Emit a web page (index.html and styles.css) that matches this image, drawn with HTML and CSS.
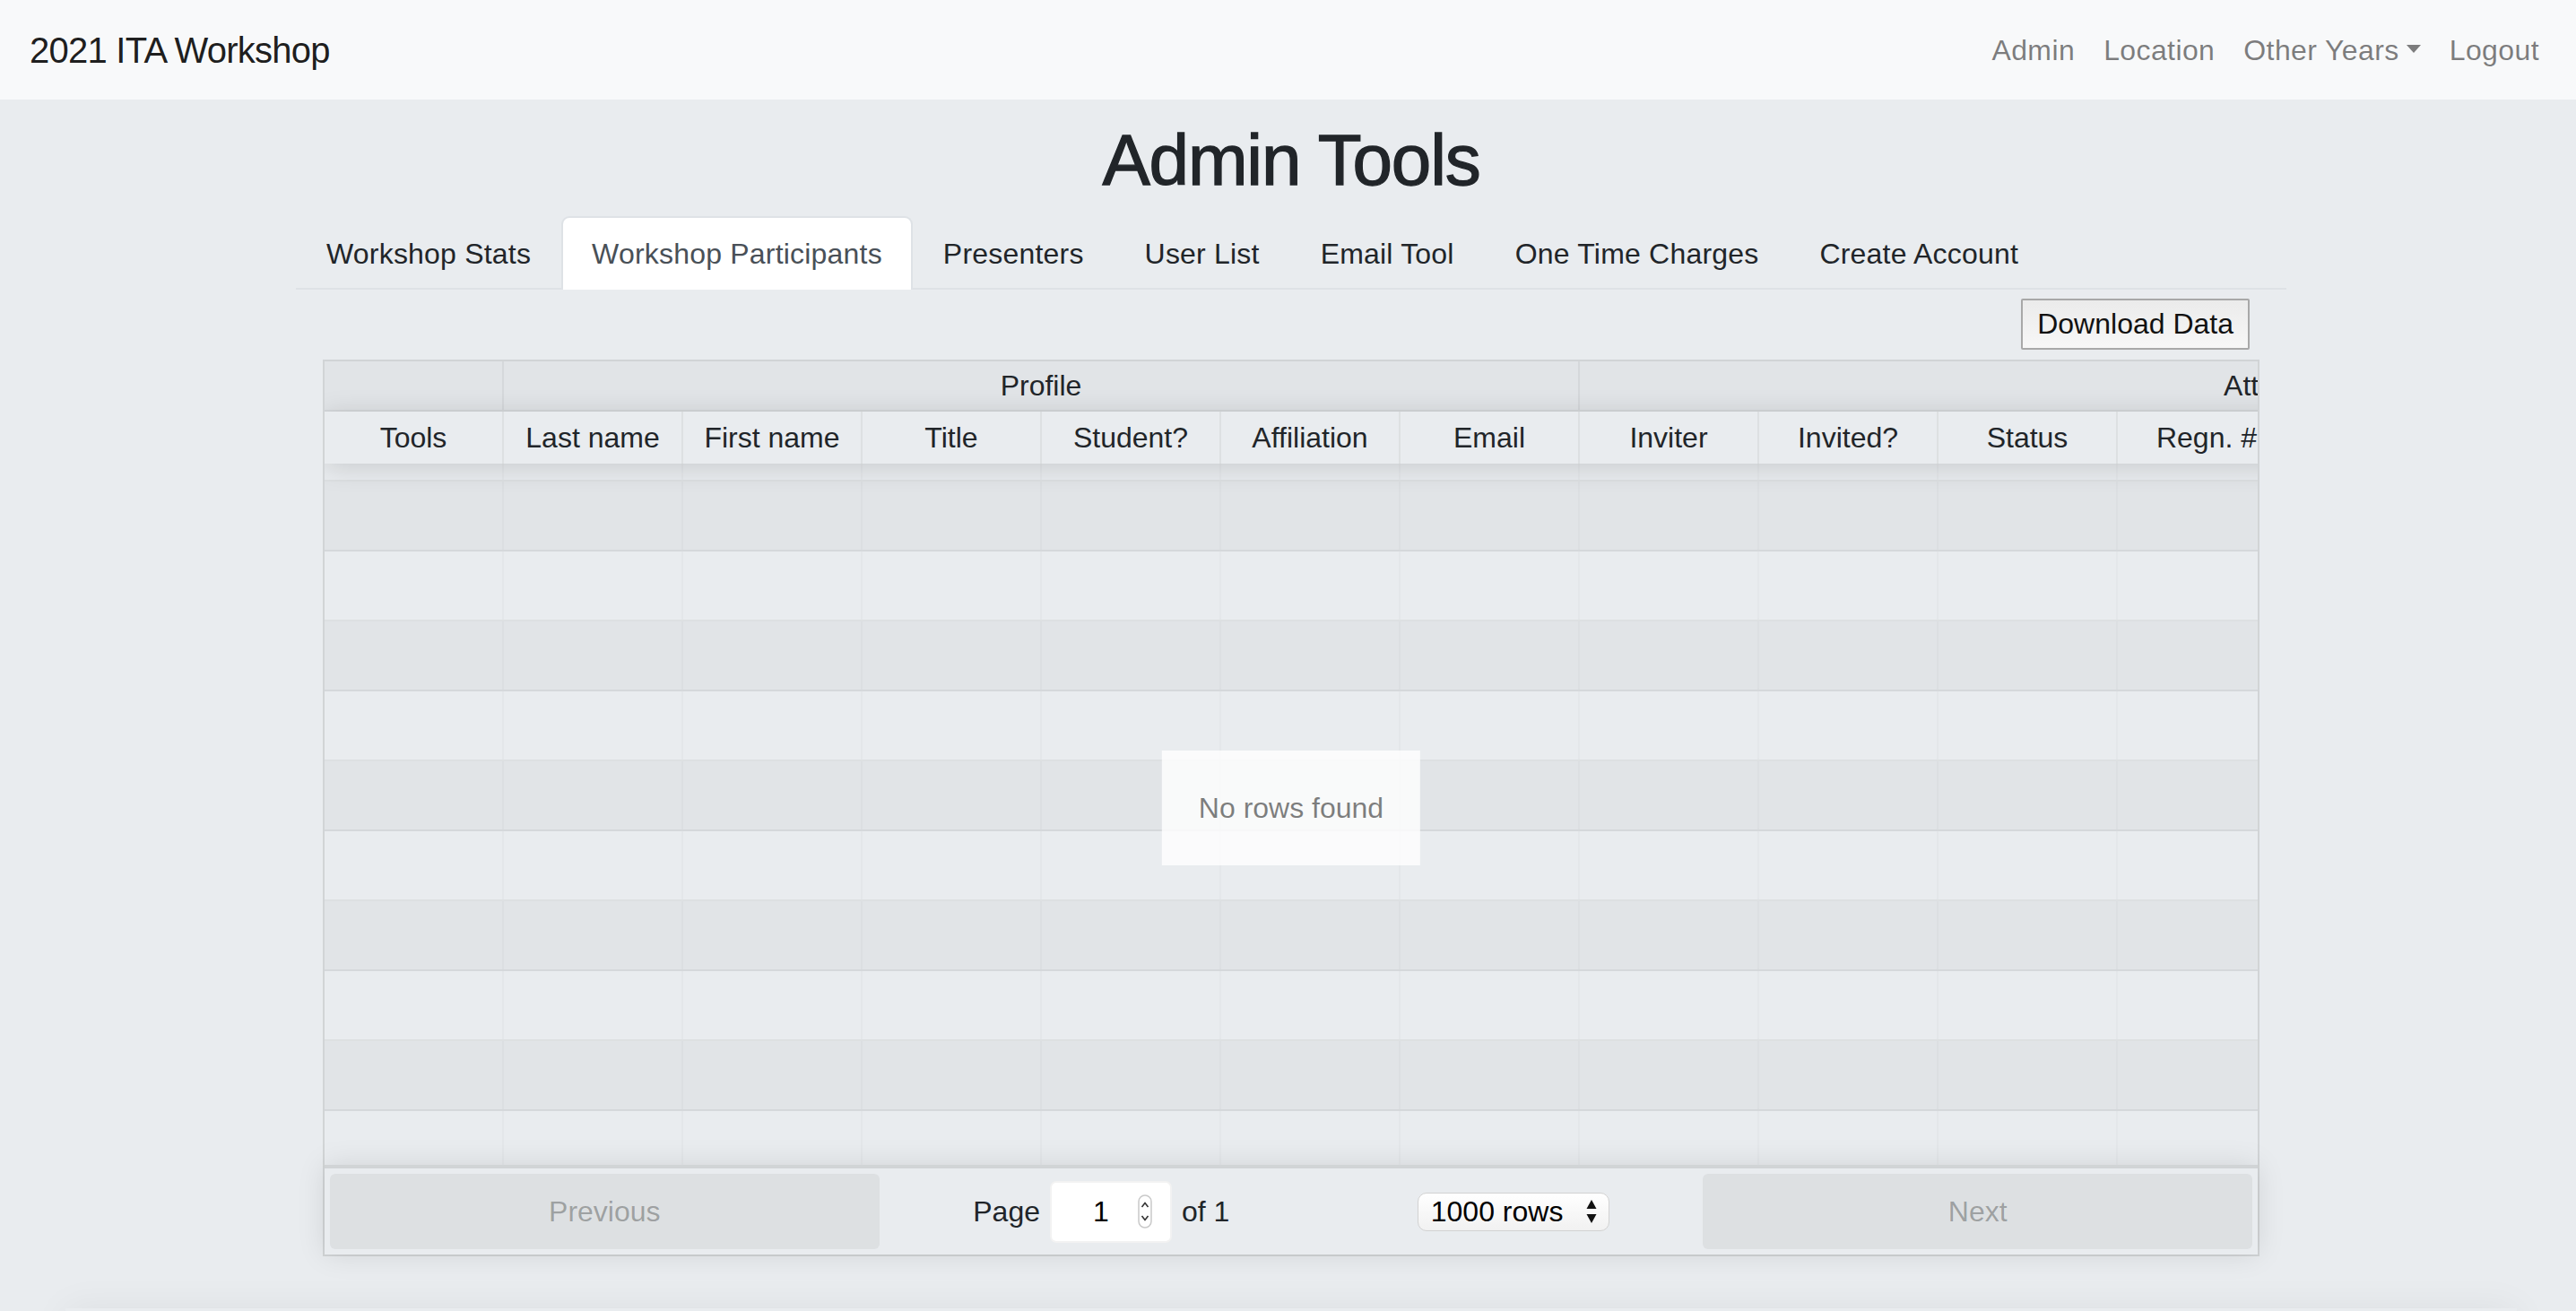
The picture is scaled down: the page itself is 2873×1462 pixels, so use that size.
FILE: index.html
```html
<!DOCTYPE html>
<html lang="en">
<head>
<meta charset="utf-8">
<title>2021 ITA Workshop - Admin Tools</title>
<link rel="stylesheet" href="styles.css">
</head>
<body>
<nav class="navbar">
  <a class="brand">2021 ITA Workshop</a>
  <ul class="navlinks">
    <li><a>Admin</a></li>
    <li><a>Location</a></li>
    <li><a class="dropdown">Other Years</a></li>
    <li><a>Logout</a></li>
  </ul>
</nav>

<main class="container">
  <h1 class="title">Admin Tools</h1>
  <ul class="tabs">
    <li class="tab">Workshop Stats</li>
    <li class="tab active">Workshop Participants</li>
    <li class="tab">Presenters</li>
    <li class="tab">User List</li>
    <li class="tab">Email Tool</li>
    <li class="tab">One Time Charges</li>
    <li class="tab">Create Account</li>
  </ul>

  <section class="panel">
    <div class="toolbar">
      <button class="dl-btn">Download Data</button>
    </div>

    <div class="rtable">
      <div class="rt-inner">
        <div class="rt-groups">
          <div class="gcell w1"></div>
          <div class="gcell w6">Profile</div>
          <div class="gcell w8">Attendance</div>
        </div>
        <div class="rt-head">
          <div class="hcell">Tools</div>
          <div class="hcell">Last name</div>
          <div class="hcell">First name</div>
          <div class="hcell">Title</div>
          <div class="hcell">Student?</div>
          <div class="hcell">Affiliation</div>
          <div class="hcell">Email</div>
          <div class="hcell">Inviter</div>
          <div class="hcell">Invited?</div>
          <div class="hcell">Status</div>
          <div class="hcell">Regn. #</div>
        </div>
        <div class="rt-body">
          <div class="rows">
            <div class="row even"><i></i><i></i><i></i><i></i><i></i><i></i><i></i><i></i><i></i><i></i><i></i></div>
            <div class="row odd"><i></i><i></i><i></i><i></i><i></i><i></i><i></i><i></i><i></i><i></i><i></i></div>
            <div class="row even"><i></i><i></i><i></i><i></i><i></i><i></i><i></i><i></i><i></i><i></i><i></i></div>
            <div class="row odd"><i></i><i></i><i></i><i></i><i></i><i></i><i></i><i></i><i></i><i></i><i></i></div>
            <div class="row even"><i></i><i></i><i></i><i></i><i></i><i></i><i></i><i></i><i></i><i></i><i></i></div>
            <div class="row odd"><i></i><i></i><i></i><i></i><i></i><i></i><i></i><i></i><i></i><i></i><i></i></div>
            <div class="row even"><i></i><i></i><i></i><i></i><i></i><i></i><i></i><i></i><i></i><i></i><i></i></div>
            <div class="row odd"><i></i><i></i><i></i><i></i><i></i><i></i><i></i><i></i><i></i><i></i><i></i></div>
            <div class="row even"><i></i><i></i><i></i><i></i><i></i><i></i><i></i><i></i><i></i><i></i><i></i></div>
            <div class="row odd"><i></i><i></i><i></i><i></i><i></i><i></i><i></i><i></i><i></i><i></i><i></i></div>
            <div class="row even"><i></i><i></i><i></i><i></i><i></i><i></i><i></i><i></i><i></i><i></i><i></i></div>
          </div>
        </div>
      </div>

      <div class="pagination">
        <div class="pg-side"><button class="pg-btn" disabled>Previous</button></div>
        <div class="pg-center">
          <span class="page-info">Page
            <span class="page-jump"><span class="pj-val">1</span>
              <svg class="spin" width="16" height="38" viewBox="0 0 16 38"><rect x="1" y="1" width="14" height="36" rx="7" fill="#fff" stroke="#c9c9c9" stroke-width="1.5"/><path d="M4.5 14 L8 9.5 L11.5 14" fill="none" stroke="#333" stroke-width="1.6"/><path d="M4.5 24 L8 28.5 L11.5 24" fill="none" stroke="#333" stroke-width="1.6"/></svg>
            </span>
            of 1</span>
          <span class="select-wrap"><span class="sel-text">1000 rows</span>
            <svg class="sel-arrows" width="14" height="30" viewBox="0 0 14 30"><path d="M7 2 L12.5 12 L1.5 12 Z" fill="#111"/><path d="M7 28 L12.5 18 L1.5 18 Z" fill="#111"/></svg>
          </span>
        </div>
        <div class="pg-side"><button class="pg-btn" disabled>Next</button></div>
      </div>

      <div class="nodata">No rows found</div>
    </div>
  </section>
</main>
<footer class="foot"></footer>
</body>
</html>
```

FILE: styles.css
```css
* { box-sizing: border-box; }
html { margin: 0; padding: 0; overflow: hidden; background: #e9ecef; }
body {
  margin: 0;
  padding: 0;
  width: 2880px;
  height: 1462px;
  overflow: hidden;
  background: #e9ecef;
  font-family: "Liberation Sans", Arial, Helvetica, sans-serif;
  color: #212529;
  font-size: 32px;
  line-height: 1.5;
}
ul { list-style: none; margin: 0; padding: 0; }

/* navbar */
.navbar {
  height: 111px;
  background: #f8f9fa;
  display: flex;
  align-items: center;
  justify-content: space-between;
  padding: 0 32px 0 33px;
}
.brand { font-size: 40px; letter-spacing: -0.75px; color: rgba(0,0,0,.9); }
.navlinks { display: flex; align-items: center; }
.navlinks a { display: block; padding: 0 16px; color: rgba(0,0,0,.5); letter-spacing: 0.4px; }
.dropdown::after {
  content: "";
  display: inline-block;
  margin-left: 8px;
  vertical-align: 8px;
  border-top: 9px solid;
  border-left: 8px solid transparent;
  border-right: 8px solid transparent;
}

/* main */
.container { width: 2280px; padding: 0 30px; margin: 0 auto; }
.title {
  margin: 20px 0 14px;
  font-size: 80px;
  font-weight: 400;
  letter-spacing: -1.2px;
  -webkit-text-stroke: 1.3px #212529;
  line-height: 96px;
  text-align: center;
}
.tabs {
  display: flex;
  border-bottom: 2px solid #dee2e6;
}
.tab {
  height: 82px;
  padding: 16px 32px;
  line-height: 48px;
  letter-spacing: 0.2px;
  border: 2px solid transparent;
  border-bottom: 0;
  border-radius: 9px 9px 0 0;
  margin-bottom: -2px;
}
.tab.active {
  background: #fff;
  border-color: #dee2e6;
  color: #495057;
}

.panel { padding: 10px 30px 0; }
.toolbar { display: flex; justify-content: flex-end; padding-right: 11px; margin-bottom: 11px; }
.dl-btn {
  height: 57px;
  padding: 0 16px;
  font-family: inherit;
  font-size: 32px;
  color: #111;
  background: linear-gradient(#ebebeb, #f7f7f7);
  border: 2px solid #a8a8a8;
  border-radius: 2px;
}

/* table */
.rtable {
  position: relative;
  height: 1000px;
  border: 2px solid rgba(0,0,0,.1);
  display: flex;
  flex-direction: column;
}
.rt-inner {
  flex: 1;
  overflow: hidden;
  display: flex;
  flex-direction: column;
  min-height: 0;
}
.rt-groups, .rt-head, .row { display: flex; flex: none; width: 4200px; }
.rt-groups {
  height: 56px;
  background: rgba(0,0,0,.03);
  border-bottom: 2px solid rgba(0,0,0,.05);
}
.gcell {
  flex: none;
  display: flex;
  align-items: center;
  justify-content: center;
  border-right: 2px solid rgba(0,0,0,.05);
}
.w1 { width: 200px; }
.w6 { width: 1200px; }
.w8 { width: 1600px; }
.rt-head {
  height: 58px;
  position: relative;
  z-index: 1;
  box-shadow: 0 4px 30px 0 rgba(0,0,0,.15);
  background: #e9ecef;
}
.hcell {
  width: 200px;
  flex: none;
  display: flex;
  align-items: center;
  justify-content: center;
  border-right: 2px solid rgba(0,0,0,.05);
}
.rt-body { flex: 1; overflow: hidden; min-height: 0; }
.rows { margin-top: -58px; }
.row {
  height: 78px;
  border-bottom: 2px solid rgba(0,0,0,.05);
}
.row.odd { background: rgba(0,0,0,.03); }
.row i {
  width: 200px;
  flex: none;
  border-right: 2px solid rgba(0,0,0,.02);
}

/* pagination */
.pagination {
  flex: none;
  height: 100px;
  display: flex;
  padding: 6px;
  border-top: 4px solid rgba(0,0,0,.1);
  box-shadow: 0 0 30px 0 rgba(0,0,0,.1);
  position: relative;
  z-index: 2;
  background: #e9ecef;
}
.pg-side { flex: 1; display: flex; }
.pg-btn {
  flex: 1;
  border: 0;
  border-radius: 6px;
  background: rgba(0,0,0,.05);
  color: rgba(0,0,0,.3);
  font-family: inherit;
  font-size: 32px;
}
.pg-center {
  flex: 1.5;
  display: flex;
  align-items: center;
  justify-content: space-around;
}
.page-info { display: flex; align-items: center; }
.page-jump {
  display: flex;
  align-items: center;
  justify-content: space-between;
  width: 136px;
  height: 69px;
  margin: 0 11px;
  padding: 0 20px 0 46px;
  background: #fff;
  border: 2px solid rgba(0,0,0,.05);
  border-radius: 7px;
}
.pj-val { color: #000; }
.select-wrap {
  display: flex;
  align-items: center;
  justify-content: space-between;
  width: 214px;
  height: 43px;
  padding: 0 12px 0 14px;
  border: 1px solid #d2d2d2;
  border-radius: 10px;
  background: linear-gradient(#ffffff, #f1f1f1);
  color: #000;
}

.nodata {
  position: absolute;
  left: 50%;
  top: 50%;
  transform: translate(-50%, -50%);
  z-index: 3;
  padding: 40px 41px;
  line-height: 48px;
  background: rgba(255,255,255,.8);
  color: rgba(0,0,0,.5);
  white-space: nowrap;
}

.foot {
  height: 200px;
  margin: 58px 73px 0;
  box-shadow: 0 0 40px rgba(0,0,0,.06);
}
```
